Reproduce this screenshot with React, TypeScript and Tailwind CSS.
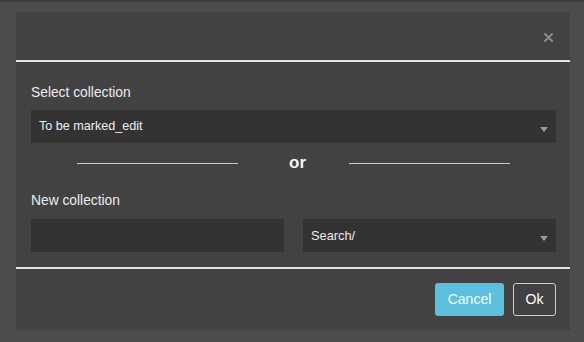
import React from 'react';

const Caret: React.FC = () => (
  <span className="w-0 h-0 border-l-[4px] border-r-[4px] border-t-[5px] border-transparent border-t-[#9a9a9a] mt-[6px]"></span>
);

const App: React.FC = () => {
  return (
    <div className="w-[584px] h-[342px] bg-[#4c4c4c] border-t-2 border-[#3e3e3e] pt-[10px] px-[16px] font-['Liberation_Sans',Arial,sans-serif] text-[#ededed]">
      <div className="w-[554px] h-[318px] bg-[#424242] flex flex-col">
        {/* Header */}
        <div className="h-[48px] flex items-center justify-end pr-[16px]">
          <svg width="11" height="11" viewBox="0 0 11 11" className="mt-[2px]">
            <path d="M2 2 L9 9 M9 2 L2 9" stroke="#8c8c8c" strokeWidth="2" strokeLinecap="round" />
          </svg>
        </div>
        <div className="h-[2px] bg-[#e4e4e4]"></div>

        {/* Body */}
        <div className="pt-[23px] pl-[15px] pr-[14px] pb-[15px]">
          <div className="text-[13.8px] leading-[16px]">Select collection</div>
          <div className="mt-[9px] h-[33px] bg-[#333333] flex items-center justify-between pl-[8px] pr-[8px]">
            <span className="text-[12.6px]">To be marked_edit</span>
            <Caret />
          </div>

          <div className="mt-[10px] h-[20px] flex items-center">
            <div className="ml-[46px] w-[161px] h-px bg-[#c8c8c8]"></div>
            <span className="ml-[51px] text-[17px] font-bold leading-[20px] text-[#f5f5f5]">or</span>
            <div className="ml-[43px] w-[161px] h-px bg-[#c8c8c8]"></div>
          </div>

          <div className="mt-[20px] text-[13.8px] leading-[16px]">New collection</div>
          <div className="mt-[10px] flex gap-[19px]">
            <div className="w-[253px] h-[33px] bg-[#333333]"></div>
            <div className="w-[253px] h-[33px] bg-[#333333] flex items-center justify-between pl-[8px] pr-[8px]">
              <span className="text-[12.8px]">Search/</span>
              <Caret />
            </div>
          </div>
        </div>
        <div className="h-[2px] bg-[#e4e4e4]"></div>

        {/* Footer */}
        <div className="flex justify-end gap-[9px] pt-[14px] pr-[14px]">
          <button className="w-[69px] h-[33px] bg-[#5bc0de] rounded-[3px] text-white text-[14px]">Cancel</button>
          <button className="w-[43px] h-[33px] border border-[#cfcfcf] rounded-[3px] text-white text-[14px]">Ok</button>
        </div>
      </div>
    </div>
  );
};

export default App;
